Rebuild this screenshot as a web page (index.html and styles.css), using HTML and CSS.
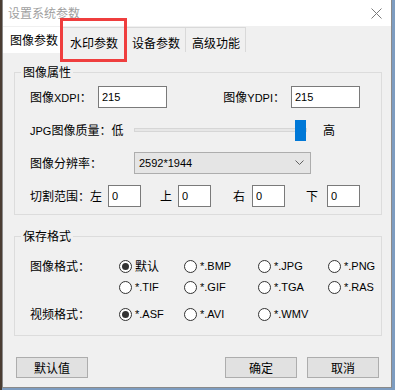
FILE: index.html
```html
<!DOCTYPE html>
<html lang="zh-CN">

<head>
    <meta charset="UTF-8">
    <meta name="viewport" content="width=device-width, initial-scale=1.0">
    <title>设置系统参数</title>
    <link rel="stylesheet" href="styles.css">
</head>

<body>

    <div class="window">
        <div class="titlebar">
            <span class="title">设置系统参数</span>
            <svg class="close" width="11" height="11" viewBox="0 0 11 11">
                <path d="M0.5 0.5 L10.5 10.5 M10.5 0.5 L0.5 10.5" stroke="#7a7a7a" stroke-width="1" fill="none" />
            </svg>
        </div>

        <div class="tabs">
            <div class="tab active">图像参数</div>
            <div class="tab tab-mark">水印参数</div>
            <div class="tab">设备参数</div>
            <div class="tab">高级功能</div>
        </div>
        <div class="mark"></div>

        <div class="page">
            <fieldset class="group group-image">
                <legend>图像属性</legend>

                <div class="row">
                    <span class="label label-dpi">图像<span class="en">XDPI</span>：</span>
                    <input class="box box-dpi" type="text" value="215">
                    <span class="pair">
                        <span class="label">图像<span class="en">YDPI</span>：</span>
                        <input class="box box-dpi" type="text" value="215">
                    </span>
                </div>

                <div class="row">
                    <span class="label label-wide"><span class="en">JPG</span>图像质量：低</span>
                    <div class="slider">
                        <div class="track"></div>
                        <div class="thumb"></div>
                    </div>
                    <span class="high">高</span>
                </div>

                <div class="row">
                    <span class="label label-wide">图像分辨率：</span>
                    <div class="combo">
                        <span class="en">2592*1944</span>
                        <svg width="9" height="6" viewBox="0 0 9 6">
                            <path d="M0.5 0.5 L4.5 4.5 L8.5 0.5" stroke="#606060" fill="none" />
                        </svg>
                    </div>
                </div>

                <div class="row">
                    <span class="label label-cut">切割范围：左</span>
                    <input class="box box-cut" type="text" value="0">
                    <span class="side side-top">上</span>
                    <input class="box box-cut" type="text" value="0">
                    <span class="side side-right">右</span>
                    <input class="box box-cut" type="text" value="0">
                    <span class="side side-bottom">下</span>
                    <input class="box box-cut" type="text" value="0">
                </div>
            </fieldset>

            <fieldset class="group group-save">
                <legend>保存格式</legend>

                <div class="radios">
                    <span class="label">图像格式：</span>
                    <span class="opt"><i class="dot on"></i>默认</span>
                    <span class="opt"><i class="dot"></i><span class="en">*.BMP</span></span>
                    <span class="opt"><i class="dot"></i><span class="en">*.JPG</span></span>
                    <span class="opt"><i class="dot"></i><span class="en">*.PNG</span></span>
                    <span></span>
                    <span class="opt"><i class="dot"></i><span class="en">*.TIF</span></span>
                    <span class="opt"><i class="dot"></i><span class="en">*.GIF</span></span>
                    <span class="opt"><i class="dot"></i><span class="en">*.TGA</span></span>
                    <span class="opt"><i class="dot"></i><span class="en">*.RAS</span></span>
                </div>

                <div class="radios radios-video">
                    <span class="label">视频格式：</span>
                    <span class="opt"><i class="dot on"></i><span class="en">*.ASF</span></span>
                    <span class="opt"><i class="dot"></i><span class="en">*.AVI</span></span>
                    <span class="opt"><i class="dot"></i><span class="en">*.WMV</span></span>
                </div>
            </fieldset>

            <div class="buttons">
                <button>默认值</button>
                <span class="spacer"></span>
                <button>确定</button>
                <button>取消</button>
            </div>
        </div>
    </div>

</body>

</html>
```

FILE: styles.css
```css
body {
    margin: 0;
    width: 395px;
    height: 390px;
    overflow: hidden;
    background: linear-gradient(to right, #4a3d33 2px, #7d9cc0 2px);
    font-family: "Noto Sans CJK SC", sans-serif;
    font-size: 12px;
    line-height: 14px;
    color: #000;
}

.en {
    font-family: "Liberation Sans", sans-serif;
    font-size: 11px;
}

.window {
    position: relative;
    margin-left: 2px;
    width: 388px;
    height: 387px;
    background-color: #f0f0f0;
    border: 1px solid #8a8a8a;
    border-top: none;
}

.titlebar {
    display: flex;
    align-items: center;
    justify-content: space-between;
    height: 26px;
    padding: 0 9px 0 5px;
    background-color: #fff;
}

.title {
    color: #a0a0a0;
}

.close {
    margin-top: 1px;
}

/* tabs */
.tabs {
    display: flex;
    align-items: flex-end;
    height: 27px;
}

.tab {
    height: 19px;
    padding: 5px 5px 0 6px;
    margin-bottom: 1px;
    margin-left: -1px;
    line-height: 19px;
    border: 1px solid #d9d9d9;
    border-bottom: none;
    background-color: #f0f0f0;
}

.tab.active {
    height: 26px;
    padding: 0 3px 0 7px;
    margin: 0;
    line-height: 26px;
    background-color: #fff;
    border: none;
}

.tab.tab-mark {
    margin-left: 1px;
    padding: 5px 7px 0 7px;
}

.mark {
    position: absolute;
    left: 57px;
    top: 18px;
    width: 61px;
    height: 38px;
    border: 3px solid #ef3e3e;
}

/* page */
.page {
    padding: 0 9px 0 11px;
}

.group {
    margin: 12px 0 0 0;
    padding: 0 21px 7px 15px;
    border: 1px solid #dcdcdc;
    min-width: 0;
}

.group legend {
    margin-left: -9px;
    padding: 0 2px;
    line-height: 14px;
}

.group-save {
    margin-top: 14px;
    padding-bottom: 13px;
}

.row {
    display: flex;
    align-items: center;
    height: 22px;
    margin-top: 11px;
}

.row:first-of-type {
    margin-top: 7px;
}

.label {
    white-space: nowrap;
}

.label-dpi {
    width: 68px;
}

.label-wide {
    width: 104px;
}

.label-cut {
    width: 80px;
}

.pair {
    display: flex;
    align-items: center;
    margin-left: auto;
}

.pair .label {
    margin-right: 6px;
}

.box {
    box-sizing: border-box;
    height: 22px;
    margin: 0;
    padding: 0 3px;
    border: 1px solid #7a7a7a;
    background-color: #fff;
    font-family: "Liberation Sans", sans-serif;
    font-size: 11px;
    color: #000;
}

.box-dpi {
    width: 69px;
}

.box-cut {
    width: 33px;
}

.side {
    width: 12px;
}

.side-top {
    margin: 0 6px 0 19px;
}

.side-right {
    margin: 0 7px 0 22px;
}

.side-bottom {
    margin: 0 9px 0 21px;
}

/* slider */
.slider {
    position: relative;
    width: 173px;
    height: 22px;
}

.track {
    margin-top: 9px;
    height: 2px;
    background-color: #e7e7e7;
    border: 1px solid #d6d6d6;
}

.thumb {
    position: absolute;
    right: 1px;
    top: 1px;
    width: 11px;
    height: 21px;
    background-color: #0078d7;
}

.high {
    margin-left: 16px;
}

/* combo */
.combo {
    box-sizing: border-box;
    display: flex;
    align-items: center;
    justify-content: space-between;
    width: 177px;
    height: 22px;
    padding: 0 6px 0 4px;
    background-color: #e5e5e5;
    border: 1px solid #adadad;
}

/* radios */
.radios {
    display: grid;
    grid-template-columns: 89px 65px 74px 70px auto;
    row-gap: 5px;
    margin-top: 15px;
}

.radios-video {
    margin-top: 11px;
}

.opt {
    display: flex;
    align-items: center;
    height: 16px;
    white-space: nowrap;
}

.radios .label {
    display: flex;
    align-items: center;
    height: 16px;
}

.dot {
    box-sizing: border-box;
    display: flex;
    align-items: center;
    justify-content: center;
    width: 13px;
    height: 13px;
    margin-right: 3px;
    border: 1px solid #333;
    border-radius: 50%;
    background-color: #fff;
}

.dot.on::after {
    content: "";
    width: 7px;
    height: 7px;
    border-radius: 50%;
    background-color: #333;
}

/* buttons */
.buttons {
    display: flex;
    gap: 10px;
    margin-top: 21px;
    padding: 0 3px 0 2px;
}

.spacer {
    flex: 1;
}

button {
    box-sizing: border-box;
    width: 72px;
    height: 21px;
    padding: 0;
    background-color: #e1e1e1;
    border: 1px solid #adadad;
    font-family: "Noto Sans CJK SC", sans-serif;
    font-size: 12px;
    color: #000;
}
```
